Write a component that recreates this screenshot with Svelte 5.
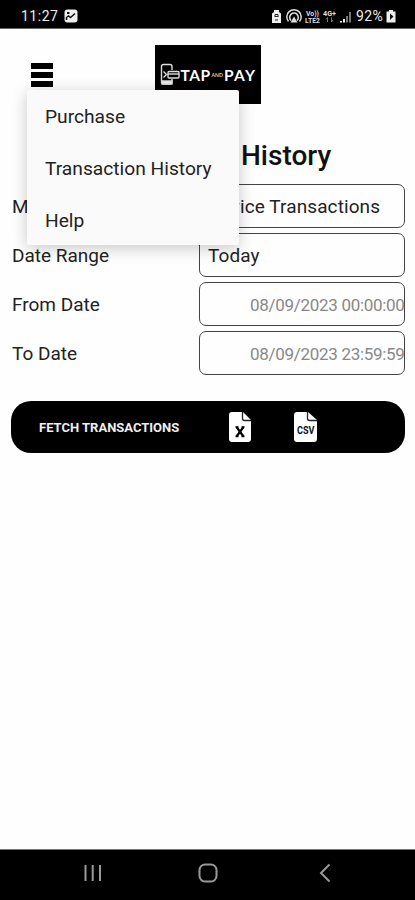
<script>
	let menuItems = ['Purchase', 'Transaction History', 'Help'];
	let fields = [
		{ label: 'Mode', value: 'Device Transactions', type: 'select' },
		{ label: 'Date Range', value: 'Today', type: 'select' },
		{ label: 'From Date', value: '08/09/2023 00:00:00', type: 'date' },
		{ label: 'To Date', value: '08/09/2023 23:59:59', type: 'date' }
	];
	let menuOpen = true;

	const toggleMenu = () => {
		menuOpen = !menuOpen;
	}
</script>

<div class="screen">
	<div class="status_bar">
		<span class="clock">11:27</span>
		<svg class="photo" width="14" height="14" viewBox="0 0 14 14">
			<rect x="0.5" y="0.5" width="13" height="13" rx="3" fill="#eee" />
			<path d="M2.500 11V8.500L4.500 7l2 1.500 4.500-4" fill="none" stroke="#111" stroke-width="1.500" />
			<path d="M3 3h2.500v2H3z" fill="#111" />
		</svg>
		<svg class="status_icons" width="84" height="16" viewBox="0 0 84 16">
			<path d="M0 5.500 2 4V2h5v2l2 1.500V15H0z" fill="#eee" />
			<path d="M2.500 8.500h4M3 12h3M3 8V6.500h3V8" stroke="#222" fill="none" />
			<g fill="none" stroke="#ddd" stroke-width="1.500">
				<path d="M16.500 13.500a7.200 7.200 0 1 1 11 0M19 12.500a4.300 4.300 0 1 1 6 0" />
				<path d="M22 8.500 18.500 14.500h7z" fill="#ddd" stroke="none" />
			</g>
			<text x="34" y="7.500" class="tiny" textLength="13" lengthAdjust="spacingAndGlyphs">Vo))</text>
			<text x="33" y="15" class="tiny" textLength="15" lengthAdjust="spacingAndGlyphs">LTE2</text>
			<text x="51" y="7.500" class="tiny" textLength="13" lengthAdjust="spacingAndGlyphs">4G+</text>
			<path d="M55.500 14V9.500l-1.500 2M59.500 9.500V14l1.500-2" stroke="#777" fill="none" />
			<path d="M68 13h2v1.500h-2zM71 11h2v3.500h-2z" fill="#eee" />
			<path d="M74 8h2v6.500h-2zM77 4h2v10.500h-2z" fill="#777" />
		</svg>
		<span class="percent">92%</span>
		<svg class="battery" width="10" height="13" viewBox="0 0 10 13">
			<path d="M3 0h4v1.500h2.500V12.500H.5V1.500H3z" fill="#eee" />
			<path d="M4 3.500 7.500 6.500 4 10z" fill="#111" />
		</svg>
	</div>

	<header>
		<button class="menu_button" on:click={toggleMenu} aria-label="Menu">
			<span></span><span></span><span></span>
		</button>
		<svg class="logo" width="106" height="59" viewBox="0 0 106 59">
			<rect width="106" height="59" fill="#000" />
			<g fill="none" stroke="#ddd" stroke-width="1.400">
				<path d="M17 25V21.500a2 2 0 0 0-2-2H8.500a2 2 0 0 0-2 2V37a2 2 0 0 0 2 2H15a2 2 0 0 0 2-2v-3" />
				<path d="M7 36h10v3H7z" fill="#eee" />
				<path d="M8.500 26.500l3 3-3 3" />
				<rect x="13" y="26.500" width="11" height="6.500" rx="1" />
				<path d="M13 29h11" />
			</g>
			<text x="25.500" y="35.500" class="logo_text" textLength="29.500">TAP</text>
			<text x="56.500" y="31.500" class="logo_and" textLength="11.500" lengthAdjust="spacingAndGlyphs">AND</text>
			<text x="69" y="35.500" class="logo_text" textLength="31">PAY</text>
		</svg>
		{#if menuOpen}
			<ul class="menu">
				{#each menuItems as item}
					<li>{item}</li>
				{/each}
			</ul>
		{/if}
	</header>

	<main>
		<h1>Transaction History</h1>
		<div class="form">
			{#each fields as { label, value, type }}
				<div class="form_row">
					<span class="label">{label}</span>
					<div class="field {type}"><span>{value}</span></div>
				</div>
			{/each}
		</div>

		<div class="actions">
			<button class="fetch">FETCH TRANSACTIONS</button>
			<svg class="file_x" width="22" height="30" viewBox="0 0 22 30">
				<path d="M3 0h11l8 8v19a3 3 0 0 1-3 3H3a3 3 0 0 1-3-3V3a3 3 0 0 1 3-3z" fill="#fff" />
				<path d="M13.500 0v6.500a2 2 0 0 0 2 2H22" fill="none" stroke="#222" stroke-width="1.300" />
				<path d="M7.500 15l7 9.500M14.500 15l-7 9.500" stroke="#000" stroke-width="2.200" />
				<path d="M6.500 15h3M12.500 15h3M6.500 24.500h3M12.500 24.500h3" stroke="#000" stroke-width="1.400" />
			</svg>
			<svg class="file_csv" width="23" height="30" viewBox="0 0 23 30">
				<path d="M3 0h11l9 8v19a3 3 0 0 1-3 3H3a3 3 0 0 1-3-3V3a3 3 0 0 1 3-3z" fill="#fff" />
				<path d="M13.500 0v6.500a2 2 0 0 0 2 2H23" fill="none" stroke="#222" stroke-width="1.300" />
				<text x="3" y="22" class="csv" textLength="17.500" lengthAdjust="spacingAndGlyphs">CSV</text>
			</svg>
		</div>
	</main>

	<nav>
		<svg width="18" height="18" viewBox="0 0 18 18">
			<path d="M1.500 1v16M8.700 1v16M16 1v16" />
		</svg>
		<svg width="20" height="20" viewBox="0 0 20 20">
			<rect x="1.500" y="1.500" width="17" height="17" rx="5.500" />
		</svg>
		<svg width="12" height="20" viewBox="0 0 12 20">
			<path d="M10.500 1.500 2 10l8.500 8.500" />
		</svg>
	</nav>
</div>

<style>
	:global(body) {
		margin: 0;
		background: #fefefe;
	}
	.screen {
		display: flex;
		flex-direction: column;
		height: 900px;
		font-family: Roboto, sans-serif;
		color: #222;
	}
	.status_bar {
		display: flex;
		align-items: center;
		box-sizing: border-box;
		height: 29px;
		padding: 4px 19px 0 21px;
		background: #000;
		border-bottom: 1px solid #666;
		color: #eee;
		font-size: 14px;
	}
	.clock {
		width: 37px;
		margin-right: 6px;
		letter-spacing: 0.5px;
	}
	.status_icons {
		margin-left: auto;
	}
	.percent {
		width: 29px;
		letter-spacing: 0.4px;
	}
	.battery {
		margin-left: 1px;
	}
	.tiny {
		font-size: 7px;
		font-weight: 700;
		fill: #ddd;
	}
	header {
		position: relative;
		display: flex;
		align-items: flex-start;
		height: 107px;
		box-sizing: border-box;
		padding: 17px 0 0 31px;
	}
	.menu_button {
		display: flex;
		flex-direction: column;
		gap: 3px;
		width: 22px;
		margin-top: 17px;
		padding: 0;
		border: none;
		background: none;
	}
	.menu_button span {
		width: 22px;
		height: 6px;
		background: #000;
	}
	.logo {
		margin-left: 102px;
		margin-top: -1px;
	}
	.logo_text {
		font: 700 15.500px Lato, sans-serif;
		fill: #fff;
	}
	.logo_and {
		font: 700 5.500px Lato, sans-serif;
		fill: #ccc;
	}
	.menu {
		position: absolute;
		z-index: 1;
		left: 27px;
		top: 61px;
		width: 212px;
		height: 155px;
		margin: 0;
		padding: 0;
		list-style: none;
		background: #fafafa;
		border-radius: 2px;
		box-shadow: 0 3px 16px rgba(0, 0, 0, 0.22);
	}
	.menu li {
		height: 52px;
		padding-left: 18px;
		line-height: 53px;
		font-size: 19.200px;
	}
	h1 {
		margin: 0;
		height: 48px;
		line-height: 40px;
		padding-left: 2px;
		text-align: center;
		font-size: 28px;
		font-weight: 500;
		color: #111;
	}
	.form {
		display: flex;
		flex-direction: column;
		gap: 5px;
	}
	.form_row {
		display: grid;
		grid-template-columns: 187px 206px;
		align-items: center;
		height: 44px;
		padding-left: 12px;
		font-size: 19px;
	}
	.field {
		display: flex;
		align-items: center;
		box-sizing: border-box;
		height: 44px;
		padding: 1px 0 0 8px;
		border: 1px solid #444;
		border-radius: 7px;
		letter-spacing: 0.1px;
		white-space: nowrap;
	}
	.field.date {
		padding-left: 50px;
		font-size: 17px;
		letter-spacing: -0.300px;
		color: #888;
	}
	.actions {
		display: flex;
		align-items: center;
		box-sizing: border-box;
		height: 52px;
		margin: 26px 10px 0 11px;
		background: #000;
		border-radius: 20px;
	}
	.fetch {
		width: 190px;
		margin-right: 28px;
		padding: 0 0 0 28px;
		border: none;
		background: none;
		color: #eee;
		font: 700 13px Roboto, sans-serif;
		text-align: left;
		white-space: nowrap;
	}
	.file_csv {
		margin-left: 43px;
	}
	.csv {
		font: 700 11px Roboto, sans-serif;
		fill: #111;
	}
	nav {
		display: flex;
		align-items: center;
		justify-content: space-between;
		box-sizing: border-box;
		height: 51px;
		margin-top: auto;
		padding: 0 84px 4px;
		background: #000;
		border-top: 1px solid #777;
	}
	nav svg {
		fill: none;
		stroke: #999;
		stroke-width: 2;
	}
	nav svg:nth-child(2) {
		margin-right: 5px;
	}
</style>
